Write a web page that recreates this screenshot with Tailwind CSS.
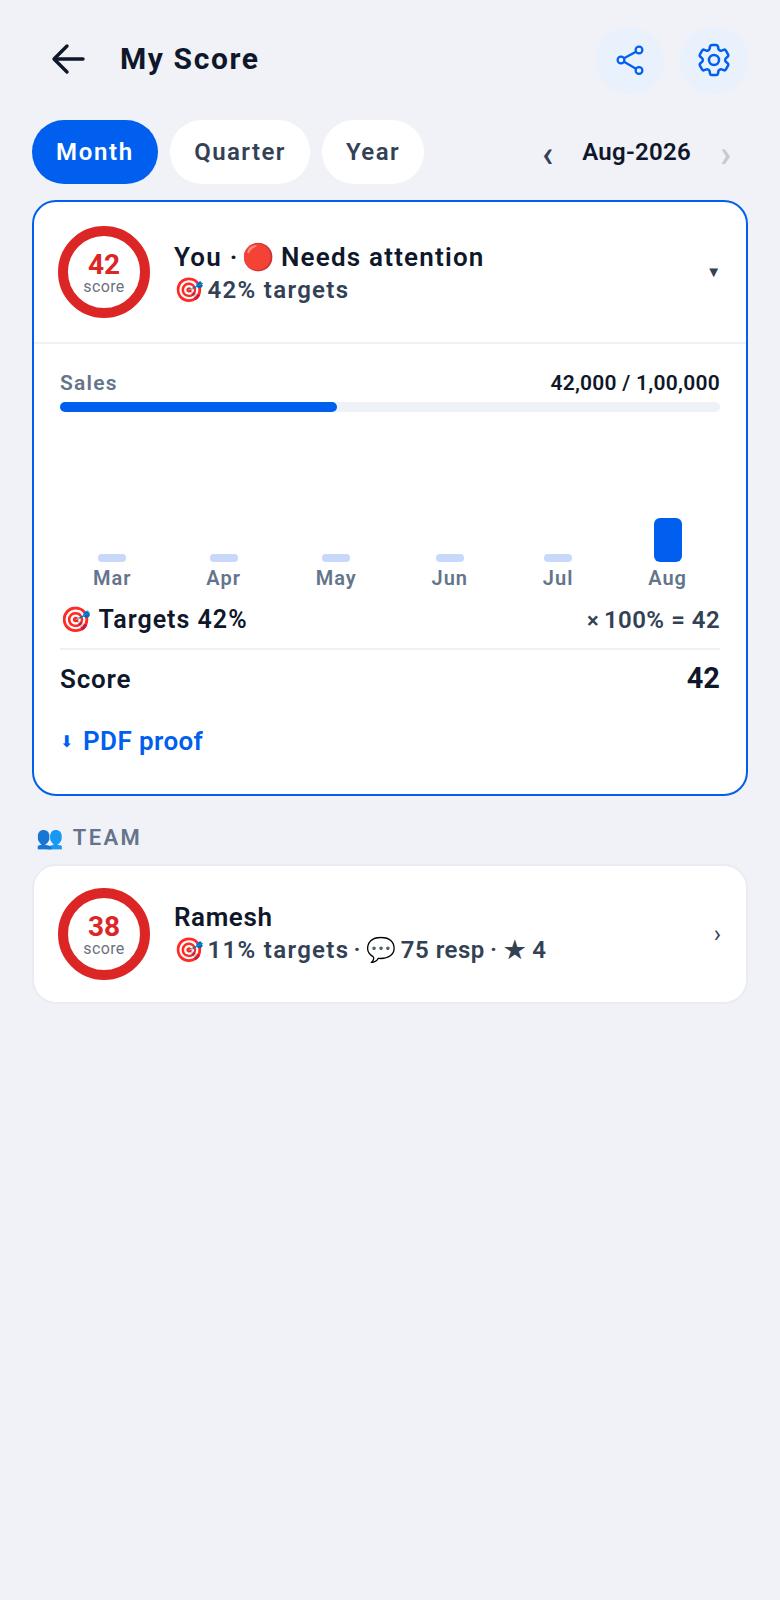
<!DOCTYPE html>
<html lang="en">
  <head>
    <meta charset="UTF-8" />
    <meta name="viewport" content="width=device-width, initial-scale=1.0" />
    <title>My Score</title>
    <script src="https://cdn.jsdelivr.net/npm/@tailwindcss/browser@4"></script>
  </head>
  <body class="min-h-screen bg-[#f0f2f7] font-['Roboto',sans-serif] text-[#0f172a]">
    <div class="px-8 w-[780px]">
      <!-- Header -->
      <header class="flex items-center h-[120px]">
        <button class="w-[72px] h-[66px] flex items-center pl-[19px]">
          <svg width="36" height="36" viewBox="0 0 36 36" fill="none" stroke="#0f172a" stroke-width="3.4" stroke-linecap="round" stroke-linejoin="round"><path d="M32 17H4"/><path d="M16 4L3 17l13 13"/></svg>
        </button>
        <h1 class="ml-[16px] -mt-[3px] text-[30px] font-bold tracking-[1.6px]">My Score</h1>
        <div class="ml-auto flex gap-4">
          <button class="w-[68px] h-[67px] rounded-full bg-[#e9f1fd] flex items-center justify-center">
            <svg width="30" height="30" viewBox="0 0 30 30" fill="none" stroke="#005fee" stroke-width="2.2" stroke-linecap="round" stroke-linejoin="round"><circle cx="24" cy="5" r="3.4"/><circle cx="6" cy="15" r="3.4"/><circle cx="24" cy="25.5" r="3.4"/><path d="M9 13.3l12-6.6"/><path d="M9 16.8l12 6.9"/></svg>
          </button>
          <button class="w-[68px] h-[67px] rounded-full bg-[#e9f1fd] flex items-center justify-center">
            <svg width="40" height="40" viewBox="0 0 24 24" fill="none" stroke="#005fee" stroke-width="1.5" stroke-linecap="round" stroke-linejoin="round"><path d="M9.594 3.94c.09-.542.56-.94 1.11-.94h2.593c.55 0 1.02.398 1.11.94l.213 1.281c.063.374.313.686.645.87.074.04.147.083.22.127.325.196.72.257 1.075.124l1.217-.456a1.125 1.125 0 0 1 1.37.49l1.296 2.247a1.125 1.125 0 0 1-.26 1.431l-1.003.827c-.293.241-.438.613-.43.992a7.723 7.723 0 0 1 0 .255c-.008.378.137.75.43.991l1.004.827c.424.35.534.955.26 1.43l-1.298 2.247a1.125 1.125 0 0 1-1.369.491l-1.217-.456c-.355-.133-.75-.072-1.076.124a6.47 6.47 0 0 1-.22.128c-.331.183-.581.495-.644.869l-.213 1.281c-.09.543-.56.94-1.11.94h-2.594c-.55 0-1.019-.398-1.11-.94l-.213-1.281c-.062-.374-.312-.686-.644-.87a6.52 6.52 0 0 1-.22-.127c-.325-.196-.72-.257-1.076-.124l-1.217.456a1.125 1.125 0 0 1-1.369-.49l-1.297-2.247a1.125 1.125 0 0 1 .26-1.431l1.004-.827c.292-.24.437-.613.43-.991a6.932 6.932 0 0 1 0-.255c.007-.38-.138-.751-.43-.992l-1.004-.827a1.125 1.125 0 0 1-.26-1.43l1.297-2.247a1.125 1.125 0 0 1 1.37-.491l1.216.456c.356.133.751.072 1.076-.124.072-.044.146-.086.22-.128.332-.183.582-.495.644-.869l.214-1.28Z"/><path d="M15 12a3 3 0 1 1-6 0 3 3 0 0 1 6 0Z"/></svg>
          </button>
        </div>
      </header>

      <!-- Period tabs -->
      <div class="flex items-center gap-3 h-[64px]">
        <button class="h-16 w-[126px] rounded-[32px] bg-[#005fee] text-white text-2xl font-semibold tracking-[1.7px]">Month</button>
        <button class="h-16 w-[140px] rounded-[32px] bg-white text-[#334155] text-2xl font-semibold tracking-[1.4px]">Quarter</button>
        <button class="h-16 w-[102px] rounded-[32px] bg-white text-[#334155] text-2xl font-semibold tracking-[1.4px]">Year</button>
        <div class="ml-auto flex items-center">
          <span class="text-[36px] leading-none text-[#334155] font-semibold mt-1">‹</span>
          <span class="mx-[29px] text-2xl font-semibold tracking-[0.3px]">Aug-2026</span>
          <span class="text-[36px] leading-none text-[#c4c8cf] font-semibold mt-1 mr-[17px]">›</span>
        </div>
      </div>

      <!-- My card -->
      <section class="mt-4 h-[596px] rounded-[24px] border-2 border-[#005fee] bg-white">
        <div class="flex items-center h-[142px] border-b-2 border-[#eef1f6] pl-6 pr-[25px]">
          <div class="w-[92px] h-[92px] rounded-full border-[10px] border-[#dc2626] flex flex-col items-center justify-center">
            <span class="mt-[2px] text-[28px] leading-[28px] font-bold text-[#dc2626]">42</span>
            <span class="text-base leading-[16px] tracking-[0.4px] text-[#6b7280]">score</span>
          </div>
          <div class="ml-6 flex-1 pt-1">
            <div class="text-[26px] leading-[33px] font-semibold tracking-[1.2px]">You <span class="[word-spacing:-4px]">· </span><span class="[word-spacing:-2px]">🔴 </span>Needs attention</div>
            <div class="text-2xl leading-[33px] font-semibold tracking-[1.3px] text-[#334155]"><span class="[word-spacing:-5px]">🎯 </span>42% targets</div>
          </div>
          <span class="text-[15px] text-[#334155]">▼</span>
        </div>
        <div class="px-[26px] pt-6">
          <div class="flex justify-between items-center h-8">
            <span class="text-[21px] font-semibold tracking-[1.2px] text-[#64748b]">Sales</span>
            <span class="text-[21px] font-semibold tracking-[0.26px]">42,000 / 1,00,000</span>
          </div>
          <div class="mt-[2px] h-[10px] rounded-[5px] bg-[#eef1f6]">
            <div class="h-full w-[42%] rounded-[5px] bg-[#005fee]"></div>
          </div>
          <!-- Month bars -->
          <div class="mt-[106px] flex justify-between px-[33px]">
            <div class="flex flex-col items-center justify-end">
              <div class="w-7 h-2 rounded-[4px] bg-[#c7d8fa]"></div>
              <span class="mt-[2px] text-xl font-semibold tracking-[1px] text-[#64748b]">Mar</span>
            </div>
            <div class="flex flex-col items-center justify-end">
              <div class="w-7 h-2 rounded-[4px] bg-[#c7d8fa]"></div>
              <span class="mt-[2px] text-xl font-semibold tracking-[1px] text-[#64748b]">Apr</span>
            </div>
            <div class="flex flex-col items-center justify-end">
              <div class="w-7 h-2 rounded-[4px] bg-[#c7d8fa]"></div>
              <span class="mt-[2px] text-xl font-semibold tracking-[1px] text-[#64748b]">May</span>
            </div>
            <div class="flex flex-col items-center justify-end">
              <div class="w-7 h-2 rounded-[4px] bg-[#c7d8fa]"></div>
              <span class="mt-[2px] text-xl font-semibold tracking-[1px] text-[#64748b]">Jun</span>
            </div>
            <div class="flex flex-col items-center justify-end">
              <div class="w-7 h-2 rounded-[4px] bg-[#c7d8fa]"></div>
              <span class="mt-[2px] text-xl font-semibold tracking-[1px] text-[#64748b]">Jul</span>
            </div>
            <div class="flex flex-col items-center justify-end">
              <div class="w-7 h-11 rounded-[6px] bg-[#005fee]"></div>
              <span class="mt-[2px] text-xl font-semibold tracking-[1px] text-[#64748b]">Aug</span>
            </div>
          </div>
          <div class="mt-[10px] flex justify-between items-center h-9">
            <span class="text-[25px] font-semibold tracking-[1px]">🎯 Targets 42%</span>
            <span class="text-2xl font-semibold tracking-[0.4px] text-[#334155]"><span class="text-[22px] [word-spacing:-1px]">× </span>100%<span class="ml-[7px]">= 42</span></span>
          </div>
          <div class="mt-[10px] border-t-2 border-[#eef1f6] flex justify-between items-center h-[60px]">
            <span class="text-[26px] font-semibold tracking-[0.8px]">Score</span>
            <span class="text-[29px] font-bold">42</span>
          </div>
          <div class="mt-[14px] flex items-center text-[#005fee]">
            <span class="w-[23px] text-base">⬇</span>
            <span class="text-[26px] font-semibold tracking-[0.4px]">PDF proof</span>
          </div>
        </div>
      </section>

      <!-- Team -->
      <div class="mt-[23px] ml-1 h-9 flex items-center text-[22px] font-semibold tracking-[2.4px] text-[#64748b]">👥 TEAM</div>
      <section class="mt-[9px] h-[140px] rounded-[24px] border-2 border-[#e9ecf2] bg-white flex items-center pl-6 pr-[25px]">
        <div class="w-[92px] h-[92px] rounded-full border-[10px] border-[#dc2626] flex flex-col items-center justify-center">
          <span class="mt-[2px] text-[28px] leading-[28px] font-bold text-[#dc2626]">38</span>
          <span class="text-base leading-[16px] tracking-[0.4px] text-[#6b7280]">score</span>
        </div>
        <div class="ml-6 flex-1">
          <div class="text-[26px] leading-[32px] font-semibold tracking-[0.6px]">Ramesh</div>
          <div class="mt-[1px] text-2xl leading-[33px] font-semibold tracking-[1.3px] text-[#334155]"><span class="[word-spacing:-5px]">🎯 </span>11% targets<span class="[word-spacing:-3px]"> · </span><span class="[word-spacing:-4px]">💬 </span><span class="tracking-[0.5px]">75 resp</span><span class="[word-spacing:-2px]"> · ★ 4</span></div>
        </div>
        <span class="text-2xl text-[#334155]">›</span>
      </section>
    </div>
  </body>
</html>
